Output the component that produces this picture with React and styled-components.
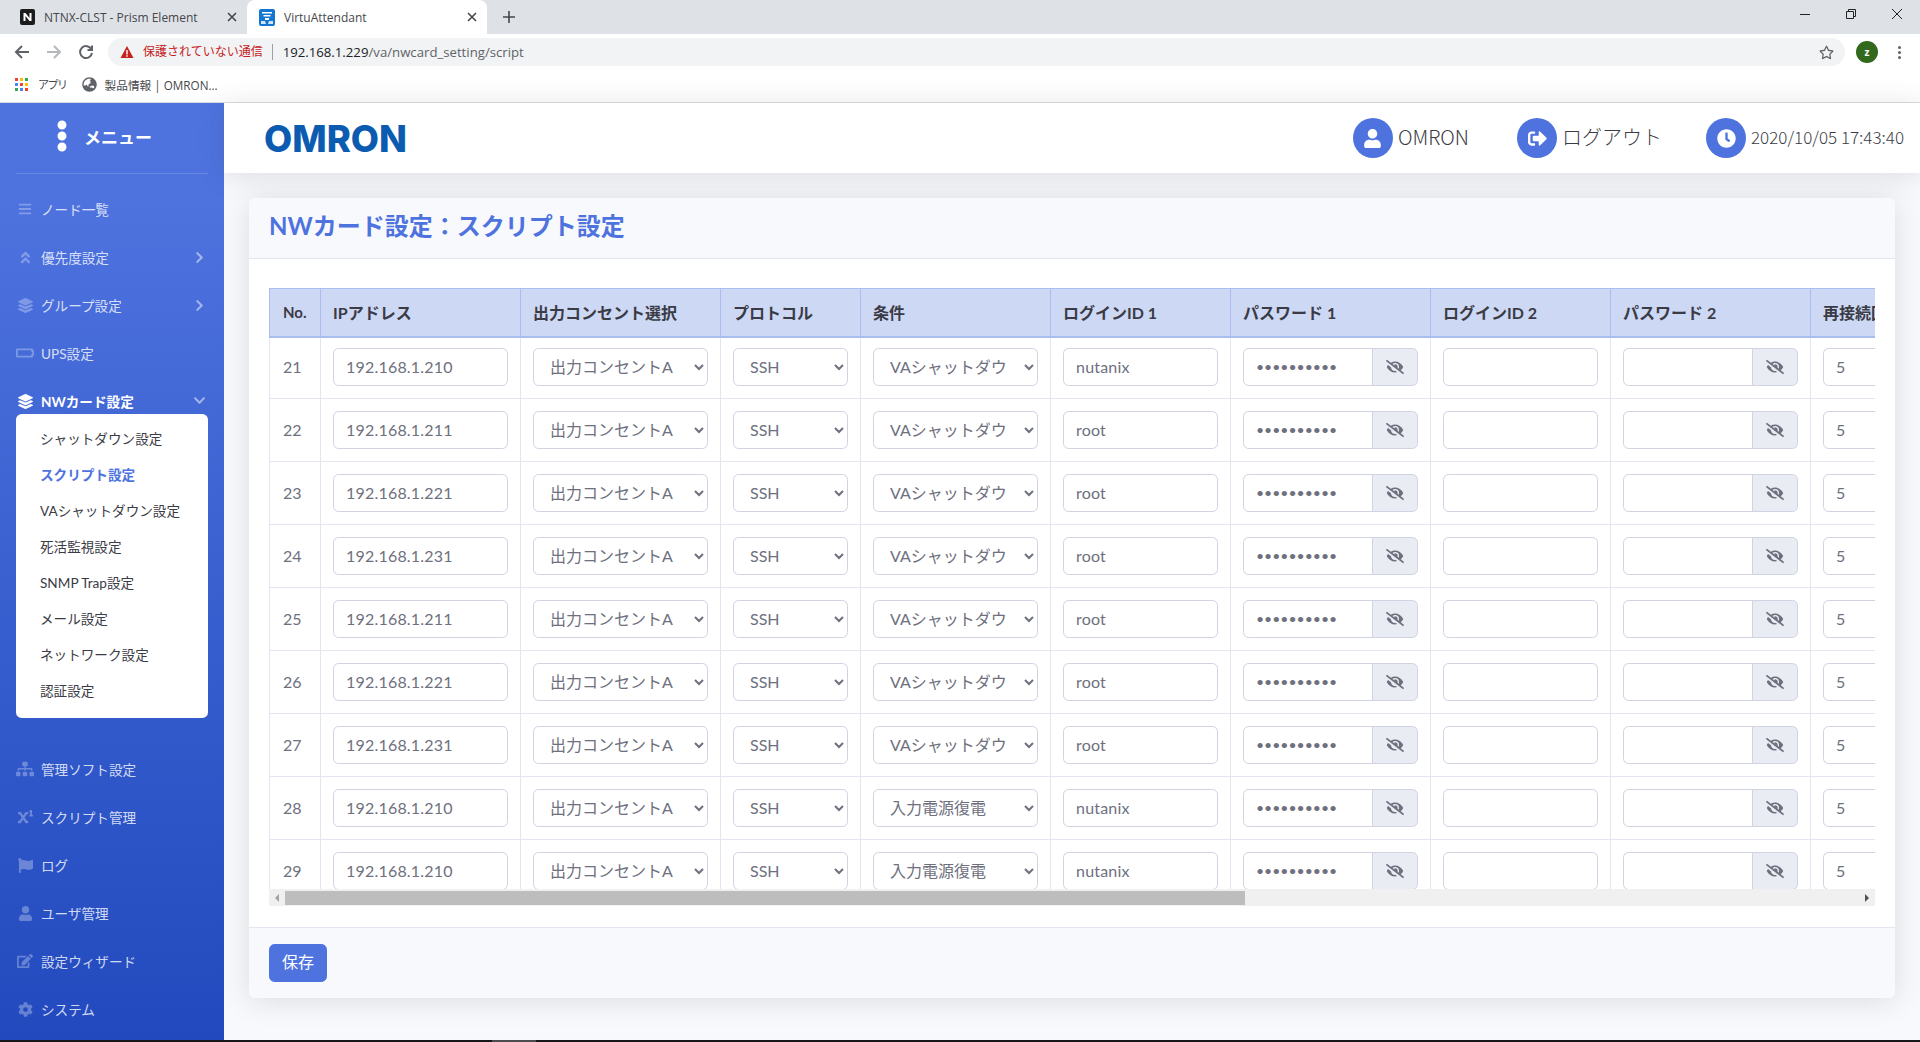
import React from 'react';
import styled, { createGlobalStyle } from 'styled-components';
import {
    FaBars, FaAngleDoubleUp, FaLayerGroup, FaBatteryEmpty, FaSitemap, FaSuperscript,
    FaFlag, FaUser, FaEdit, FaCog, FaChevronRight, FaChevronDown, FaEllipsisV, FaSignOutAlt,
    FaClock, FaEyeSlash, FaGlobeAsia, FaRegStar
} from 'react-icons/fa';

const Global = createGlobalStyle`
    html, body { margin: 0; padding: 0; height: 100%; overflow: hidden; background: #f8f9fc; }
    * { box-sizing: border-box; }
    body { font-family: Lato, "Noto Sans CJK JP", sans-serif; }
`;

const uiFont = '"Open Sans", "Noto Sans CJK JP", sans-serif';

const Page = styled.div`
    width: 1920px;
    height: 1042px;
    display: flex;
    flex-direction: column;
    overflow: hidden;
`;

/* browser frame */
const TabStrip = styled.div`
    height: 34px;
    background: #dee1e6;
    display: flex;
    align-items: stretch;
    font-family: ${uiFont};
    font-size: 12px;
    color: #45474b;
`;
const Tab = styled.div`
    width: ${p => p.$w}px;
    margin-left: ${p => p.$ml || 0}px;
    display: flex;
    align-items: center;
    gap: 9px;
    padding: 0 10px 0 ${p => p.$pl}px;
    border-radius: 8px 8px 0 0;
    background: ${p => (p.$active ? '#fff' : 'transparent')};
    span { flex: 1; white-space: nowrap; }
`;
const TabClose = styled.svg`
    width: 10px;
    height: 10px;
    stroke: #45474b;
    stroke-width: 1.6;
`;
const PlusIcon = styled.svg`
    width: 12px;
    height: 12px;
    margin: 11px 0 0 16px;
    stroke: #45474b;
    stroke-width: 1.6;
`;
const WindowControls = styled.div`
    margin-left: auto;
    display: flex;
    align-items: flex-start;
    gap: 36px;
    padding: 9px 18px 0 0;
    svg { width: 10px; height: 10px; stroke: #222; fill: none; stroke-width: 1; }
`;
const Toolbar = styled.div`
    height: 38px;
    display: flex;
    align-items: center;
    background: #fff;
    padding: 0 19px 2px 14px;
    font-family: ${uiFont};
`;
const NavIcons = styled.div`
    display: flex;
    gap: 16px;
    margin-right: 14px;
    svg { width: 16px; height: 16px; fill: none; stroke-width: 2; }
`;
const Omnibox = styled.div`
    flex: 1;
    height: 28px;
    border-radius: 14px;
    background: #f1f3f4;
    display: flex;
    align-items: center;
    padding: 0 11px 0 12px;
    font-size: 13.2px;
    svg.warn { width: 14px; height: 14px; margin-right: 9px; }
`;
const NotSecure = styled.span`
    color: #c5221f;
    font-size: 12px;
    padding-right: 9px;
    border-right: 1px solid #9aa0a6;
    line-height: 16px;
`;
const Url = styled.span`
    margin-left: 10px;
    color: #5f6368;
    b { font-weight: 400; color: #202124; }
`;
const StarBox = styled.span`
    margin-left: auto;
    color: #5f6368;
    display: flex;
    font-size: 15px;
`;
const Avatar = styled.div`
    width: 22px;
    height: 22px;
    margin-left: 11px;
    border-radius: 50%;
    background: #33691e;
    color: #fff;
    font-size: 10px;
    font-weight: 700;
    display: flex;
    align-items: center;
    justify-content: center;
`;
const Kebab = styled.div`
    margin-left: 20px;
    display: grid;
    gap: 2px;
    i { display: block; width: 3px; height: 3px; border-radius: 50%; background: #5f6368; }
`;
const Bookmarks = styled.div`
    height: 31px;
    display: flex;
    align-items: center;
    background: #fff;
    padding: 0 0 6px 15px;
    border-bottom: 1px solid #dadce0;
    font-family: ${uiFont};
    font-size: 11.7px;
    color: #45474b;
`;
const AppsGrid = styled.div`
    display: grid;
    grid-template-columns: repeat(3, 3px);
    gap: 2px;
    margin-right: 10px;
`;
const AppDot = styled.i`
    display: block;
    width: 3px;
    height: 3px;
    background: ${p => p.$color};
`;
const AppsLabel = styled.span`
    font-size: 11px;
    letter-spacing: -1.5px;
`;
const GlobeBox = styled.span`
    display: flex;
    font-size: 15px;
    color: #5f6368;
    margin: 0 8px 0 15px;
`;

/* app layout */
const Shell = styled.div`
    flex: 1;
    min-height: 0;
    display: flex;
`;
const Sidebar = styled.nav`
    width: 224px;
    flex: none;
    background: linear-gradient(180deg, #4e73df 10%, #224abe 100%);
    color: #fff;
`;
const Brand = styled.div`
    height: 70px;
    display: flex;
    align-items: center;
    padding: 0 0 4px 46px;
    gap: 6px;
    font-size: 17px;
    font-weight: 700;
    svg { font-size: 32px; }
`;
const Divider = styled.hr`
    margin: 0 16px 11px;
    border: 0;
    border-top: 1px solid rgba(255, 255, 255, .15);
`;
const NavItem = styled.div`
    height: ${p => (p.$open ? 37 : 48)}px;
    padding: ${p => (p.$open ? '17px 18px 0 16px' : '0 18px 0 16px')};
    display: flex;
    align-items: ${p => (p.$open ? 'flex-start' : 'center')};
    font-size: 13.6px;
    line-height: ${p => (p.$open ? '16px' : 'normal')};
    font-weight: ${p => (p.$open ? 700 : 400)};
    color: ${p => (p.$open ? '#fff' : 'rgba(255,255,255,.8)')};
`;
const NavIcon = styled.span`
    width: 18px;
    margin-right: 7px;
    display: flex;
    justify-content: center;
    font-size: ${p => p.$size || 15}px;
    color: ${p => (p.$open ? '#fff' : 'rgba(255,255,255,.3)')};
`;
const Caret = styled.span`
    margin-left: auto;
    display: flex;
    font-size: 13px;
    color: rgba(255, 255, 255, .5);
`;
const SubMenu = styled.div`
    margin: 0 16px 27px;
    padding: 6px 0 10px;
    background: #fff;
    border-radius: 5.6px;
`;
const SubItem = styled.div`
    height: 36px;
    display: flex;
    align-items: center;
    padding-left: 24px;
    font-size: 13.6px;
    font-weight: ${p => (p.$active ? 700 : 400)};
    color: ${p => (p.$active ? '#4e73df' : '#3a3b45')};
`;
const Main = styled.main`
    flex: 1;
    min-width: 0;
    background: #f8f9fc;
`;
const Topbar = styled.header`
    height: 70px;
    background: #fff;
    box-shadow: 0 .15rem 1.75rem 0 rgba(58, 59, 69, .15);
    display: flex;
    align-items: center;
    padding: 0 16px 0 39px;
`;
const Logo = styled.svg`
    width: 145px;
    height: 34px;
    margin-top: 2px;
    overflow: visible;
    text {
        font-family: Inter, "Liberation Sans", sans-serif;
        font-weight: 800;
        font-size: 37px;
        fill: #0b5cb0;
    }
`;
const TopLinks = styled.div`
    margin-left: auto;
    display: flex;
    align-items: center;
`;
const TopLink = styled.div`
    display: flex;
    align-items: center;
    margin-left: ${p => p.$ml || 0}px;
    gap: 5px;
    font-family: "Noto Sans CJK JP", sans-serif;
    font-weight: 300;
    font-size: ${p => p.$size}px;
    color: #3a3b45;
`;
const TopText = styled.span`
    margin-top: -3px;
`;
const Circle = styled.span`
    width: 40px;
    height: 40px;
    border-radius: 50%;
    background: #4e73df;
    color: #fff;
    display: flex;
    align-items: center;
    justify-content: center;
    font-size: 19px;
`;

/* card and table */
const Card = styled.section`
    height: 800px;
    margin: 25px 25px 0;
    background: #fff;
    border-radius: 5.6px;
    box-shadow: 0 .15rem 1.75rem 0 rgba(58, 59, 69, .15);
    overflow: hidden;
    display: flex;
    flex-direction: column;
`;
const CardHeader = styled.div`
    height: 61px;
    padding: 0 20px 7px;
    display: flex;
    align-items: center;
    background: #f8f9fc;
    border-bottom: 1px solid #e3e6f0;
    h1 {
        margin: 0;
        font-size: 24px;
        font-weight: 700;
        color: #4e73df;
    }
`;
const CardBody = styled.div`
    flex: 1;
    padding: 29px 20px 20px;
    min-height: 0;
`;
const TableClip = styled.div`
    height: 601px;
    overflow: hidden;
`;
const Table = styled.table`
    width: 1901px;
    table-layout: fixed;
    border-collapse: collapse;
    font-size: 16px;
    color: #6e707e;

    tr > :first-child { padding-left: 13px; }
    tbody tr:first-child td { height: 61px; padding-top: 10px; padding-bottom: 12px; }
`;
const Th = styled.th`
    height: 48px;
    padding: 0 12px;
    text-align: left;
    white-space: nowrap;
    overflow: hidden;
    background: #cdd8f5;
    border: 1px solid #a9bdf0;
    border-bottom: 2px solid #a9bdf0;
    font-weight: 700;
    font-size: ${p => p.$size || 16}px;
    color: #3a3b45;
`;
const Td = styled.td`
    height: 63px;
    padding: 12px;
    border: 1px solid #e3e6f0;
    vertical-align: middle;
`;
const fieldStyle = `
    display: block;
    width: 100%;
    height: 38px;
    padding: 6px 12px;
    border: 1px solid #d1d3e2;
    border-radius: 5.6px;
    background: #fff;
    color: #6e707e;
    font: inherit;
    font-size: 16px;
    outline: none;
`;
const Field = styled.input`
    ${fieldStyle}
    letter-spacing: .2px;
`;
const Select = styled.select`${fieldStyle}`;
const Group = styled.div`
    display: flex;
    input {
        flex: 1;
        min-width: 0;
        border-radius: 5.6px 0 0 5.6px;
        font-size: 14px;
        letter-spacing: 0;
    }
`;
const EyeAddon = styled.span`
    width: 46px;
    flex: none;
    display: flex;
    align-items: center;
    justify-content: center;
    margin-left: -1px;
    border: 1px solid #d1d3e2;
    border-radius: 0 5.6px 5.6px 0;
    background: #eaecf4;
    color: #6e707e;
    font-size: 18px;
`;
const Scrollbar = styled.div`
    height: 17px;
    display: flex;
    align-items: center;
    background: #f0f0f0;
    padding: 0 6px;
`;
const Thumb = styled.div`
    width: 960px;
    height: 14px;
    margin-left: 6px;
    background: #bdbdbd;
`;
const Arrow = styled.i`
    width: 0;
    height: 0;
    border-top: 4px solid transparent;
    border-bottom: 4px solid transparent;
    ${p => (p.$right ? 'border-left: 4px solid #505050; margin-left: auto;' : 'border-right: 4px solid #a3a3a3;')}
`;
const CardFooter = styled.div`
    height: 71px;
    padding: 16px 20px;
    background: #f8f9fc;
    border-top: 1px solid #e3e6f0;
`;
const SaveButton = styled.button`
    width: 58px;
    height: 38px;
    padding: 0 0 5px;
    border: 1px solid #4e73df;
    border-radius: 5.6px;
    background: #4e73df;
    color: #fff;
    font: inherit;
    font-size: 16px;
`;
const Taskbar = styled.div`
    height: 2px;
    flex: none;
    background: #14161a;
    padding-left: 492px;
    i { display: block; width: 44px; height: 2px; background: #4a4c50; }
`;

const colWidths = [51, 200, 200, 140, 190, 180, 200, 180, 200, 360];
const outlets = ['出力コンセントA', '出力コンセントB'];
const conds = ['VAシャットダウン', '入力電源復電'];
const rows = [
    [21, '192.168.1.210', conds[0], 'nutanix'],
    [22, '192.168.1.211', conds[0], 'root'],
    [23, '192.168.1.221', conds[0], 'root'],
    [24, '192.168.1.231', conds[0], 'root'],
    [25, '192.168.1.211', conds[0], 'root'],
    [26, '192.168.1.221', conds[0], 'root'],
    [27, '192.168.1.231', conds[0], 'root'],
    [28, '192.168.1.210', conds[1], 'nutanix'],
    [29, '192.168.1.210', conds[1], 'nutanix']
];
const heads = ['IPアドレス', '出力コンセント選択', 'プロトコル', '条件', 'ログインID 1', 'パスワード 1', 'ログインID 2', 'パスワード 2', '再接続回数'];
const navTop = [
    { icon: FaBars, text: 'ノード一覧', size: 14 },
    { icon: FaAngleDoubleUp, text: '優先度設定', caret: true },
    { icon: FaLayerGroup, text: 'グループ設定', caret: true },
    { icon: FaBatteryEmpty, text: 'UPS設定', size: 18 }
];
const subItems = ['シャットダウン設定', 'スクリプト設定', 'VAシャットダウン設定', '死活監視設定', 'SNMP Trap設定', 'メール設定', 'ネットワーク設定', '認証設定'];
const navBottom = [
    { icon: FaSitemap, text: '管理ソフト設定', size: 18 },
    { icon: FaSuperscript, text: 'スクリプト管理' },
    { icon: FaFlag, text: 'ログ' },
    { icon: FaUser, text: 'ユーザ管理' },
    { icon: FaEdit, text: '設定ウィザード', size: 16 },
    { icon: FaCog, text: 'システム' }
];
const appColors = ['#ea4335', '#fbbc04', '#34a853', '#4285f4', '#ea4335', '#fbbc04', '#34a853', '#4285f4', '#ea4335'];

const CloseX = () => (
    <TabClose viewBox="0 0 10 10"><path d="M1 1l8 8M9 1l-8 8" /></TabClose>
);

const NavRow = ({ icon: Icon, text, caret, size }) => (
    <NavItem>
        <NavIcon $size={size}><Icon /></NavIcon>
        {text}
        {caret && <Caret><FaChevronRight /></Caret>}
    </NavItem>
);

const Password = ({ value }) => (
    <Group>
        <Field type="password" defaultValue={value} />
        <EyeAddon><FaEyeSlash /></EyeAddon>
    </Group>
);

const App = function App() {
    return (
        <Page>
            <Global />
            <TabStrip>
                <Tab $w={237} $ml={10} $pl={10}>
                    <svg width="15" height="16" viewBox="0 0 15 16">
                        <rect width="15" height="16" rx="2" fill="#1c1c1c" />
                        <path d="M3.5 12V4h2l4 5V4h2v8h-2l-4-5v5z" fill="#fff" />
                    </svg>
                    <span>NTNX-CLST - Prism Element</span>
                    <CloseX />
                </Tab>
                <Tab $w={240} $pl={12} $active>
                    <svg width="16" height="17" viewBox="0 0 16 17">
                        <rect width="16" height="17" rx="2" fill="#1576d2" />
                        <path d="M3 3h10v1.5H3zM4.500 6h7v1.500h-7zM6 9h4v2H6z" fill="#fff" />
                        <path d="M2 12h4l1 3H2zM14 12h-4l-1 3h5z" fill="#cfe5fa" />
                    </svg>
                    <span>VirtuAttendant</span>
                    <CloseX />
                </Tab>
                <PlusIcon viewBox="0 0 12 12"><path d="M6 0v12M0 6h12" /></PlusIcon>
                <WindowControls>
                    <svg viewBox="0 0 10 10"><path d="M0 5.500h10" /></svg>
                    <svg viewBox="0 0 10 10"><path d="M.5 2.500h7v7h-7zM2.500 2.500v-2h7v7h-2" /></svg>
                    <svg viewBox="0 0 10 10"><path d="M0 0l10 10M10 0L0 10" /></svg>
                </WindowControls>
            </TabStrip>
            <Toolbar>
                <NavIcons>
                    <svg viewBox="0 0 16 16" stroke="#5f6368"><path d="M15 8H2M8 2L2 8l6 6" /></svg>
                    <svg viewBox="0 0 16 16" stroke="#b5b8bc"><path d="M1 8h13M8 2l6 6-6 6" /></svg>
                    <svg viewBox="0 0 16 16" stroke="#5f6368"><path d="M13.500 5.500A6 6 0 1 0 14 9M14 1.500v4.500H9.500" /></svg>
                </NavIcons>
                <Omnibox>
                    <svg className="warn" viewBox="0 0 14 14">
                        <path d="M7 1l6.500 12H.5z" fill="#c5221f" />
                        <path d="M6.300 5h1.400v4.500H6.300zM6.300 10.300h1.400v1.400H6.300z" fill="#fff" />
                    </svg>
                    <NotSecure>保護されていない通信</NotSecure>
                    <Url><b>192.168.1.229</b>/va/nwcard_setting/script</Url>
                    <StarBox><FaRegStar /></StarBox>
                </Omnibox>
                <Avatar>z</Avatar>
                <Kebab><i /><i /><i /></Kebab>
            </Toolbar>
            <Bookmarks>
                <AppsGrid>
                    {appColors.map((c, i) => <AppDot key={i} $color={c} />)}
                </AppsGrid>
                <AppsLabel>アプリ</AppsLabel>
                <GlobeBox><FaGlobeAsia /></GlobeBox>
                製品情報 | OMRON...
            </Bookmarks>
            <Shell>
                <Sidebar>
                    <Brand><FaEllipsisV />メニュー</Brand>
                    <Divider />
                    {navTop.map(n => <NavRow key={n.text} {...n} />)}
                    <NavItem $open>
                        <NavIcon $open><FaLayerGroup /></NavIcon>
                        NWカード設定
                        <Caret><FaChevronDown /></Caret>
                    </NavItem>
                    <SubMenu>
                        {subItems.map(s => <SubItem key={s} $active={s === 'スクリプト設定'}>{s}</SubItem>)}
                    </SubMenu>
                    {navBottom.map(n => <NavRow key={n.text} {...n} />)}
                </Sidebar>
                <Main>
                    <Topbar>
                        <Logo viewBox="0 0 145 34">
                            <text x="1" y="30" textLength="143" lengthAdjust="spacingAndGlyphs">OMRON</text>
                        </Logo>
                        <TopLinks>
                            <TopLink $size={20}><Circle><FaUser /></Circle><TopText>OMRON</TopText></TopLink>
                            <TopLink $ml={48} $size={20}><Circle><FaSignOutAlt /></Circle><TopText>ログアウト</TopText></TopLink>
                            <TopLink $ml={44} $size={17}><Circle><FaClock /></Circle><TopText>2020/10/05 17:43:40</TopText></TopLink>
                        </TopLinks>
                    </Topbar>
                    <Card>
                        <CardHeader><h1>NWカード設定：スクリプト設定</h1></CardHeader>
                        <CardBody>
                            <TableClip>
                                <Table>
                                    <colgroup>
                                        {colWidths.map((w, i) => <col key={i} width={w} />)}
                                    </colgroup>
                                    <thead>
                                        <tr>
                                            <Th $size={15}>No.</Th>
                                            {heads.map(h => <Th key={h}>{h}</Th>)}
                                        </tr>
                                    </thead>
                                    <tbody>
                                        {rows.map(([no, ip, cond, login]) => (
                                            <tr key={no}>
                                                <Td>{no}</Td>
                                                <Td><Field defaultValue={ip} /></Td>
                                                <Td>
                                                    <Select defaultValue={outlets[0]}>
                                                        {outlets.map(o => <option key={o}>{o}</option>)}
                                                    </Select>
                                                </Td>
                                                <Td>
                                                    <Select defaultValue="SSH">
                                                        <option>SSH</option>
                                                        <option>Telnet</option>
                                                    </Select>
                                                </Td>
                                                <Td>
                                                    <Select defaultValue={cond}>
                                                        {conds.map(o => <option key={o}>{o}</option>)}
                                                    </Select>
                                                </Td>
                                                <Td><Field defaultValue={login} /></Td>
                                                <Td><Password value="**********" /></Td>
                                                <Td><Field defaultValue="" /></Td>
                                                <Td><Password value="" /></Td>
                                                <Td><Field defaultValue="5" /></Td>
                                            </tr>
                                        ))}
                                    </tbody>
                                </Table>
                            </TableClip>
                            <Scrollbar>
                                <Arrow />
                                <Thumb />
                                <Arrow $right />
                            </Scrollbar>
                        </CardBody>
                        <CardFooter><SaveButton>保存</SaveButton></CardFooter>
                    </Card>
                </Main>
            </Shell>
            <Taskbar><i /></Taskbar>
        </Page>
    );
};
export default App;
